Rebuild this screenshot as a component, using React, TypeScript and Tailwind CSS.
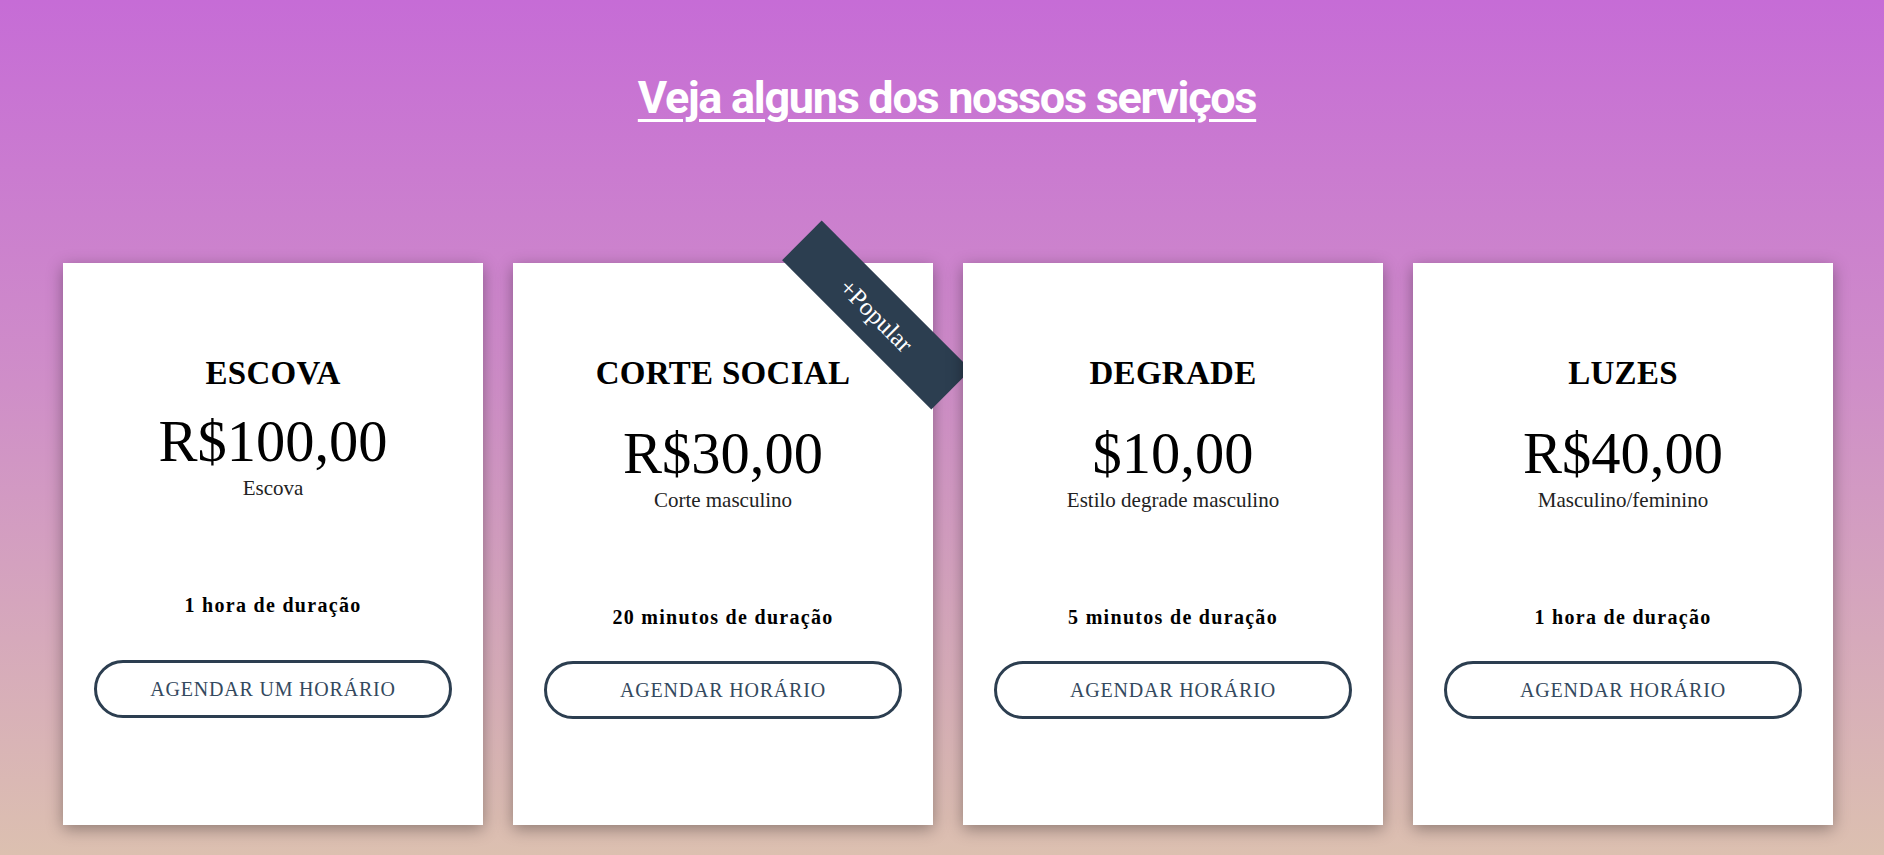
import React from "react";

type Service = {
  title: string;
  price: string;
  note: string;
  duration: string;
  cta: string;
  tight?: boolean;
  popular?: boolean;
};

const SERVICES: ReadonlyArray<Service> = [
  {
    title: "ESCOVA",
    price: "R$100,00",
    note: "Escova",
    duration: "1 hora de duração",
    cta: "AGENDAR UM HORÁRIO",
    tight: true,
  },
  {
    title: "CORTE SOCIAL",
    price: "R$30,00",
    note: "Corte masculino",
    duration: "20 minutos de duração",
    cta: "AGENDAR HORÁRIO",
    popular: true,
  },
  {
    title: "DEGRADE",
    price: "$10,00",
    note: "Estilo degrade masculino",
    duration: "5 minutos de duração",
    cta: "AGENDAR HORÁRIO",
  },
  {
    title: "LUZES",
    price: "R$40,00",
    note: "Masculino/feminino",
    duration: "1 hora de duração",
    cta: "AGENDAR HORÁRIO",
  },
];

function ServiceCard({ service }: { service: Service }) {
  return (
    <div className="relative flex h-[562px] w-[420px] shrink-0 flex-col items-center bg-white pt-[90px] text-center shadow-[0_4px_15px_rgba(0,0,0,0.35)]">
      {service.popular ? (
        <div className="absolute left-[258px] top-[24px] flex h-[56px] w-[211px] rotate-45 items-center justify-center bg-[#2c3e50] text-[25px] leading-none text-white">
          +Popular
        </div>
      ) : null}

      <h3 className="text-[33px] font-bold leading-[40px] tracking-[0.3px] text-black">{service.title}</h3>
      <p className={`${service.tight ? "mt-[17px]" : "mt-[29px]"} text-[58.5px] leading-[64px] text-black`}>
        {service.price}
      </p>
      <p className="mt-px text-[21px] leading-[26px] text-[#222]">{service.note}</p>
      <p className="mt-[91px] text-[20px] font-bold leading-[26px] tracking-[1.3px] text-black">
        {service.duration}
      </p>
      <button
        className={`${service.tight ? "mt-[42px]" : "mt-[31px]"} flex h-[58px] w-[358px] items-center justify-center rounded-full border-[3px] border-[#2c3e50] bg-white text-[20px] tracking-[0.8px] text-[#34495e]`}
      >
        {service.cta}
      </button>
    </div>
  );
}

export default function App() {
  return (
    <div className="h-[855px] w-full overflow-hidden bg-[linear-gradient(180deg,#c66cd6_0%,#cf8ec8_45%,#dcc0b0_100%)] font-['Liberation_Serif','Times_New_Roman',serif]">
      <div className="pt-[72px] pl-[10px] text-center">
        <h2 className="font-['Roboto',sans-serif] text-[45px] font-bold leading-[52px] tracking-[-1.3px] text-white underline decoration-[3px] underline-offset-[6px]">
          Veja alguns dos nossos serviços
        </h2>
      </div>

      <div className="mt-[139px] flex gap-[30px] pl-[63px]">
        {SERVICES.map((s) => (
          <ServiceCard key={s.title} service={s} />
        ))}
      </div>
    </div>
  );
}
